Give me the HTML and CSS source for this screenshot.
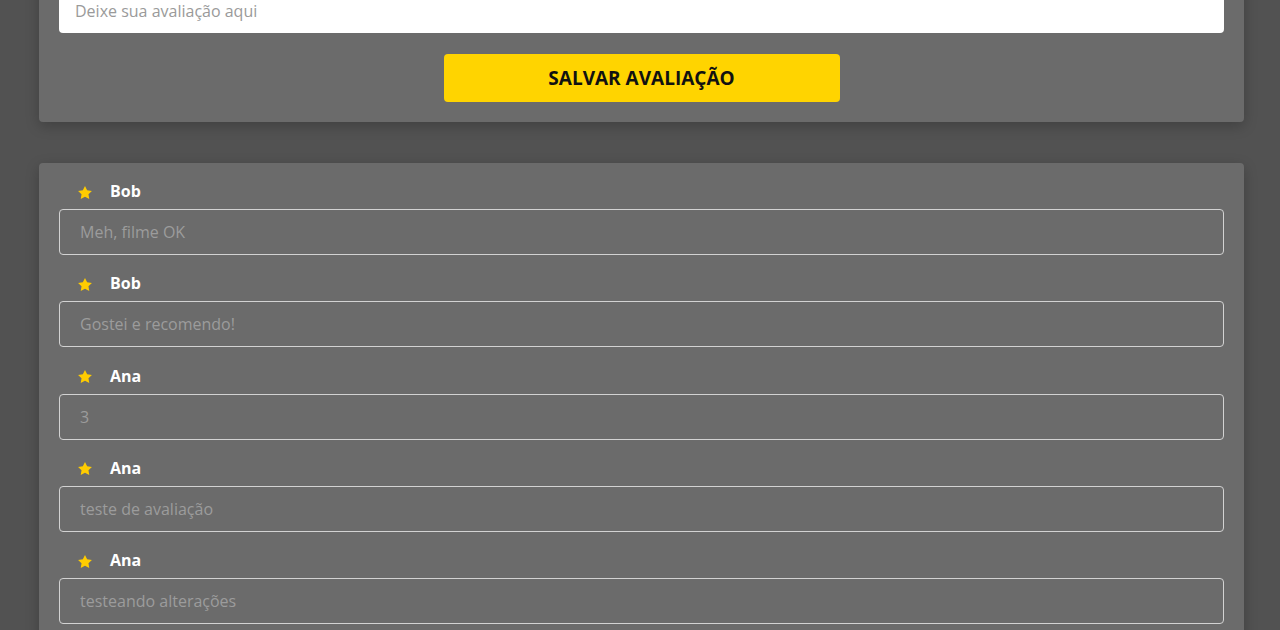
FILE: index.html
```html
<!DOCTYPE html>
<html lang="pt-BR">
<head>
<meta charset="utf-8">
<title>Avaliações</title>
<link rel="stylesheet" href="styles.css">
</head>
<body>
<main class="page">
  <section class="card form-card">
    <input class="review-input" type="text" placeholder="Deixe sua avaliação aqui">
    <div class="btn-row">
      <button class="btn-save" type="button">SALVAR AVALIAÇÃO</button>
    </div>
  </section>

  <section class="card list-card">
    <div class="review">
      <div class="review-head">
        <svg class="star" viewBox="0 0 24 24"><path d="M12 1.5l3.2 6.5 7.2 1-5.2 5 1.2 7.1L12 17.7l-6.4 3.4 1.2-7.1-5.2-5 7.2-1z"/></svg>
        <span class="review-name">Bob</span>
      </div>
      <input class="review-text" type="text" value="Meh, filme OK" readonly>
    </div>
    <div class="review">
      <div class="review-head">
        <svg class="star" viewBox="0 0 24 24"><path d="M12 1.5l3.2 6.5 7.2 1-5.2 5 1.2 7.1L12 17.7l-6.4 3.4 1.2-7.1-5.2-5 7.2-1z"/></svg>
        <span class="review-name">Bob</span>
      </div>
      <input class="review-text" type="text" value="Gostei e recomendo!" readonly>
    </div>
    <div class="review">
      <div class="review-head">
        <svg class="star" viewBox="0 0 24 24"><path d="M12 1.5l3.2 6.5 7.2 1-5.2 5 1.2 7.1L12 17.7l-6.4 3.4 1.2-7.1-5.2-5 7.2-1z"/></svg>
        <span class="review-name">Ana</span>
      </div>
      <input class="review-text" type="text" value="3" readonly>
    </div>
    <div class="review">
      <div class="review-head">
        <svg class="star" viewBox="0 0 24 24"><path d="M12 1.5l3.2 6.5 7.2 1-5.2 5 1.2 7.1L12 17.7l-6.4 3.4 1.2-7.1-5.2-5 7.2-1z"/></svg>
        <span class="review-name">Ana</span>
      </div>
      <input class="review-text" type="text" value="teste de avaliação" readonly>
    </div>
    <div class="review">
      <div class="review-head">
        <svg class="star" viewBox="0 0 24 24"><path d="M12 1.5l3.2 6.5 7.2 1-5.2 5 1.2 7.1L12 17.7l-6.4 3.4 1.2-7.1-5.2-5 7.2-1z"/></svg>
        <span class="review-name">Ana</span>
      </div>
      <input class="review-text" type="text" value="testeando alterações" readonly>
    </div>
  </section>
</main>
</body>
</html>
```

FILE: styles.css
```css
* { box-sizing: border-box; }

html, body {
  margin: 0;
  padding: 0;
  background: #525252;
  font-family: "Open Sans", "Noto Sans", Arial, sans-serif;
  overflow: hidden;
}

.page {
  width: 1205px;
  margin: -29px auto 0 39px;
  display: flex;
  flex-direction: column;
  gap: 41px;
}

.card {
  background: #6b6b6b;
  border-radius: 4px;
  box-shadow: 0 4px 14px rgba(0, 0, 0, 0.22);
}

.form-card {
  padding: 20px;
  display: flex;
  flex-direction: column;
  gap: 21px;
}

.review-input {
  display: block;
  width: 100%;
  height: 42px;
  border: none;
  border-radius: 4px;
  background: #ffffff;
  padding: 0 16px 3px;
  font-family: inherit;
  font-size: 16px;
  color: #333;
  outline: none;
}

.review-input::placeholder { color: #9a9a9a; }

.btn-row {
  display: flex;
  justify-content: center;
}

.btn-save {
  width: 396px;
  height: 48px;
  border: none;
  border-radius: 4px;
  background: #ffd400;
  color: #111111;
  font-family: inherit;
  font-weight: 700;
  font-size: 19px;
  cursor: pointer;
}

.list-card {
  padding: 17px 20px 20px;
  display: flex;
  flex-direction: column;
  gap: 17.25px;
}

.review {
  display: flex;
  flex-direction: column;
  gap: 7px;
}

.review-head {
  display: flex;
  align-items: center;
  padding-left: 18px;
  height: 22px;
}

.star {
  width: 16px;
  height: 16px;
  fill: #ffcc00;
  margin-top: 3px;
  margin-right: 17px;
}

.review-name {
  color: #ffffff;
  font-weight: 700;
  font-size: 16px;
  line-height: 22px;
}

.review-text {
  display: block;
  width: 100%;
  height: 46px;
  border: 1px solid #d2d2d2;
  border-radius: 4px;
  background: transparent;
  padding: 0 20px;
  font-family: inherit;
  font-size: 16px;
  color: #9c9c9c;
  outline: none;
}
```
